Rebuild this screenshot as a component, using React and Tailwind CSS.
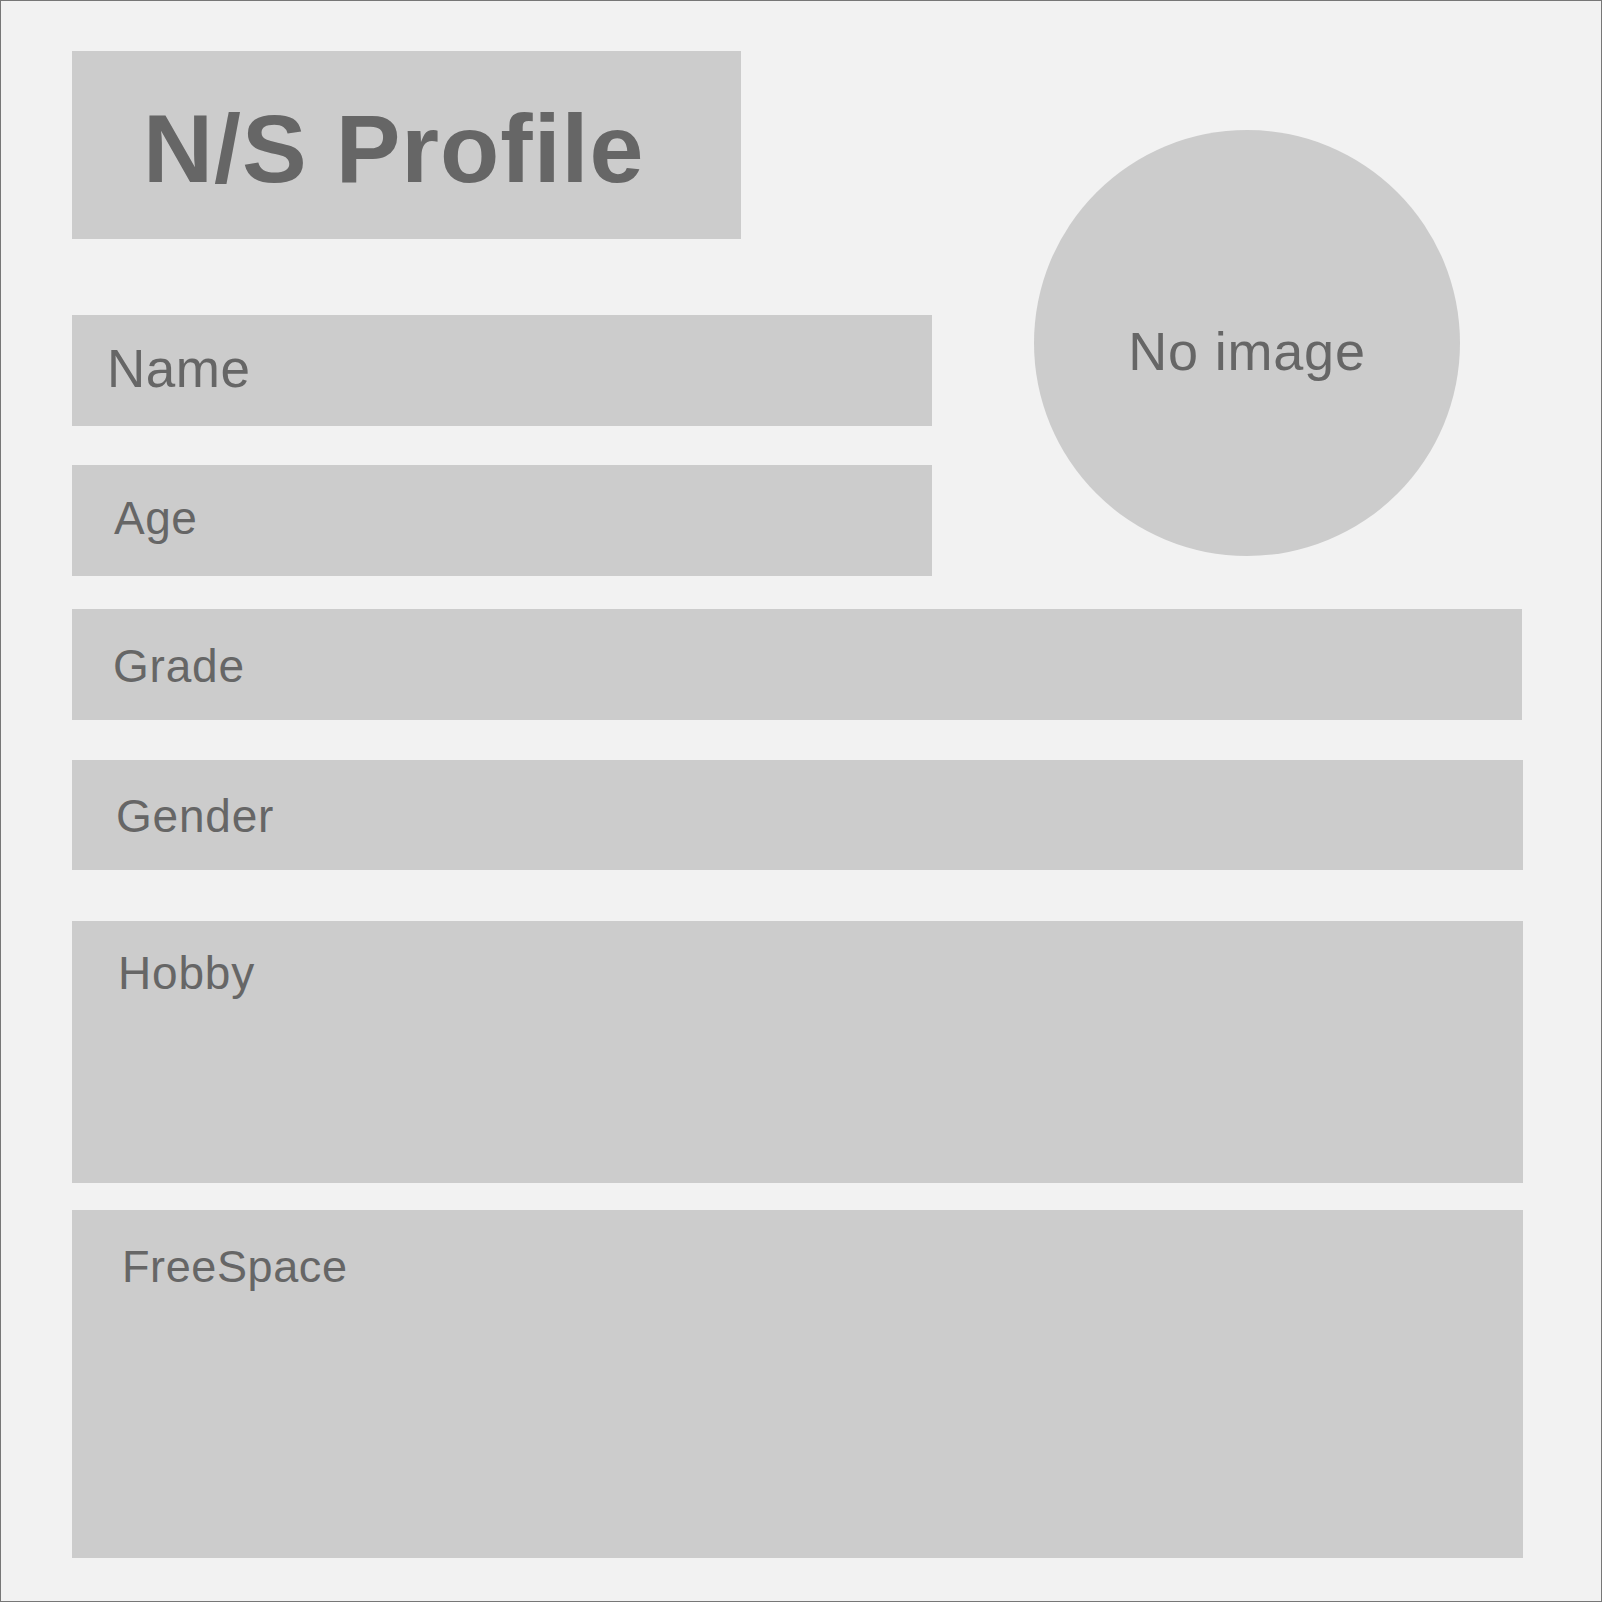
import React from 'react';

const font = { fontFamily: '"Liberation Sans", Arial, sans-serif' };

const Field = ({ label, className, textClass }) => (
  <div className={`bg-[#cccccc] ${className}`}>
    <div className={`text-[#666666] leading-none ${textClass}`}>{label}</div>
  </div>
);

const App = () => {
  return (
    <div
      className="w-[1602px] h-[1602px] border border-[#777777] bg-[#f2f2f2] pl-[71px] pt-[50px]"
      style={font}
    >
      {/* top section */}
      <div className="flex">
        <div className="flex flex-col">
          <div className="w-[669px] h-[188px] bg-[#cccccc] pl-[71px] pt-[49px]">
            <h1 className="text-[97px] font-bold leading-none tracking-[1px] text-[#666666]">N/S Profile</h1>
          </div>
          <Field
            label="Name"
            className="mt-[76px] w-[860px] h-[111px]"
            textClass="text-[53px] pl-[35px] pt-[27px] tracking-[0.5px]"
          />
          <Field
            label="Age"
            className="mt-[39px] w-[860px] h-[111px]"
            textClass="text-[46px] pl-[42px] pt-[30px] tracking-[0.5px]"
          />
        </div>
        <div className="ml-[102px] mt-[79px] w-[426px] h-[426px] rounded-full bg-[#cccccc] flex items-center justify-center pt-[16px]">
          <span className="text-[54px] leading-none tracking-[0.8px] text-[#666666]">No image</span>
        </div>
      </div>

      <Field
        label="Grade"
        className="mt-[33px] w-[1450px] h-[111px]"
        textClass="text-[46px] pl-[41px] pt-[34px] tracking-[0.8px]"
      />
      <Field
        label="Gender"
        className="mt-[40px] w-[1451px] h-[110px]"
        textClass="text-[46px] pl-[44px] pt-[33px] tracking-[0.8px]"
      />
      <Field
        label="Hobby"
        className="mt-[51px] w-[1451px] h-[262px]"
        textClass="text-[46px] pl-[46px] pt-[29px] tracking-[0.8px]"
      />
      <Field
        label="FreeSpace"
        className="mt-[27px] w-[1451px] h-[348px]"
        textClass="text-[45px] pl-[50px] pt-[34px] tracking-[0.6px]"
      />
    </div>
  );
};

export default App;
